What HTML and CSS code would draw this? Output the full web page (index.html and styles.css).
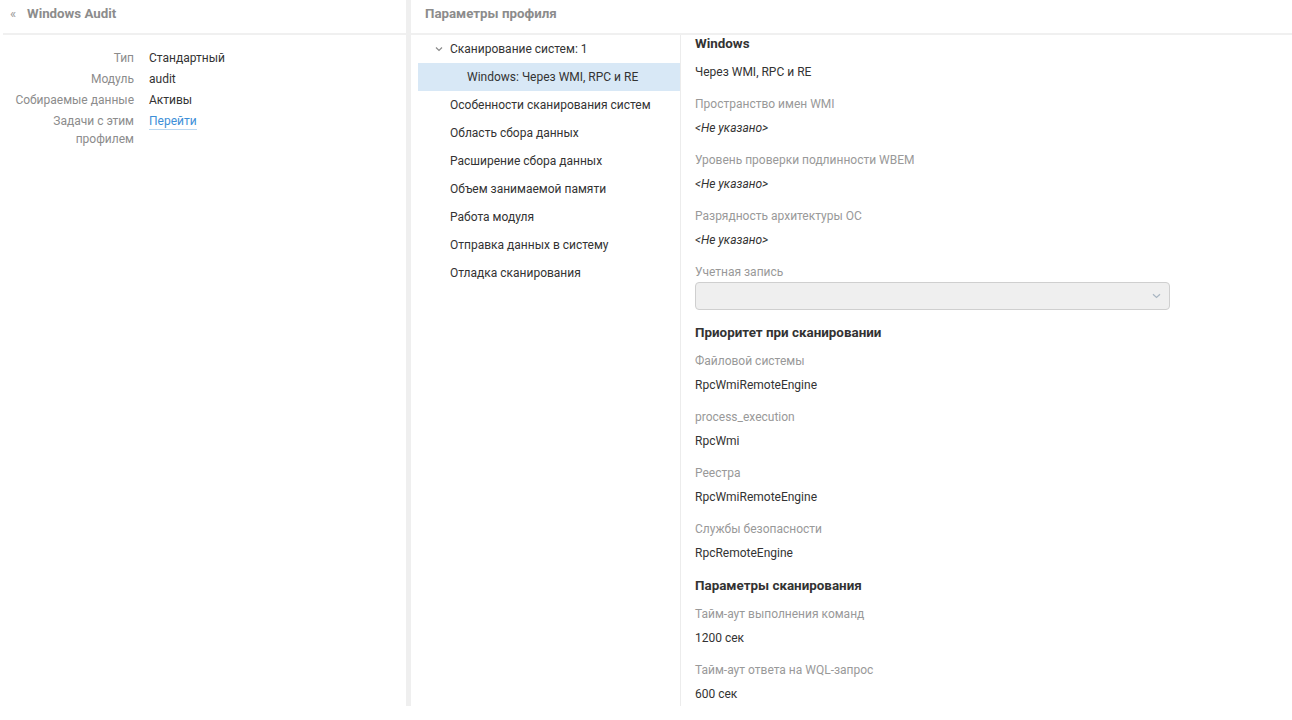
FILE: index.html
```html
<!DOCTYPE html>
<html lang="ru">
<head>
<meta charset="utf-8">
<title>Windows Audit</title>
<link rel="stylesheet" href="styles.css">
</head>
<body>
<div class="app">
  <aside class="left">
    <div class="header left-header"><span class="back">«</span><span class="title">Windows Audit</span></div>
    <div class="props">
      <div class="plabel">Тип</div><div class="pvalue">Стандартный</div>
      <div class="plabel">Модуль</div><div class="pvalue">audit</div>
      <div class="plabel">Собираемые данные</div><div class="pvalue">Активы</div>
      <div class="plabel">Задачи с этим профилем</div><div class="pvalue"><a class="link">Перейти</a></div>
    </div>
  </aside>
  <div class="divider"></div>
  <main class="right">
    <div class="header right-header"><span class="title">Параметры профиля</span></div>
    <div class="body">
      <nav class="tree">
        <div class="row parent"><svg class="chev" width="8" height="6" viewBox="0 0 8 6"><path d="M1 1.5 L4 4.5 L7 1.5" fill="none" stroke="#8a8a8a" stroke-width="1.2"/></svg>Сканирование систем: 1</div>
        <div class="row child selected">Windows: Через WMI, RPC и RE</div>
        <div class="row">Особенности сканирования систем</div>
        <div class="row">Область сбора данных</div>
        <div class="row">Расширение сбора данных</div>
        <div class="row">Объем занимаемой памяти</div>
        <div class="row">Работа модуля</div>
        <div class="row">Отправка данных в систему</div>
        <div class="row">Отладка сканирования</div>
      </nav>
      <section class="details">
        <h3 class="sec first">Windows</h3>
        <div class="val">Через WMI, RPC и RE</div>
        <div class="lbl">Пространство имен WMI</div>
        <div class="val empty">&lt;Не указано&gt;</div>
        <div class="lbl">Уровень проверки подлинности WBEM</div>
        <div class="val empty">&lt;Не указано&gt;</div>
        <div class="lbl">Разрядность архитектуры ОС</div>
        <div class="val empty">&lt;Не указано&gt;</div>
        <div class="lbl">Учетная запись</div>
        <div class="select"><svg width="9" height="6" viewBox="0 0 9 6"><path d="M1 1.2 L4.5 4.5 L8 1.2" fill="none" stroke="#a9b6c2" stroke-width="1.2"/></svg></div>
        <h3 class="sec">Приоритет при сканировании</h3>
        <div class="lbl">Файловой системы</div>
        <div class="val">RpcWmiRemoteEngine</div>
        <div class="lbl">process_execution</div>
        <div class="val">RpcWmi</div>
        <div class="lbl">Реестра</div>
        <div class="val">RpcWmiRemoteEngine</div>
        <div class="lbl">Службы безопасности</div>
        <div class="val">RpcRemoteEngine</div>
        <h3 class="sec later">Параметры сканирования</h3>
        <div class="lbl">Тайм-аут выполнения команд</div>
        <div class="val">1200 сек</div>
        <div class="lbl">Тайм-аут ответа на WQL-запрос</div>
        <div class="val">600 сек</div>
      </section>
    </div>
  </main>
</div>
</body>
</html>
```

FILE: styles.css
```css
* { box-sizing: border-box; }
html, body { margin: 0; padding: 0; background: #fff; }
body {
  font-family: Roboto, "Liberation Sans", Arial, sans-serif;
  font-size: 12px;
  color: #333;
}
.app {
  display: flex;
  height: 706px;
  overflow: hidden;
}
.left {
  width: 406px;
  flex: none;
  padding-left: 3px;
}
.divider {
  width: 5px;
  flex: none;
  background: #efefef;
}
.right {
  flex: 1;
  display: flex;
  flex-direction: column;
  min-width: 0;
}
.header {
  height: 35px;
  border-bottom: 2px solid #f0f0f0;
  display: flex;
  align-items: center;
  padding-bottom: 7px;
}
.header .title {
  font-size: 13.3px;
  font-weight: 700;
  color: #8c8c8c;
}
.left-header { padding-left: 7px; }
.back {
  color: #9a9a9a;
  font-size: 13px;
  width: 17px;
}
.right-header { padding-left: 14px; }

.props {
  display: grid;
  grid-template-columns: 120px 1fr;
  column-gap: 15px;
  row-gap: 3px;
  padding-top: 14px;
  padding-left: 11px;
  line-height: 18px;
}
.plabel {
  text-align: right;
  color: #8c8c8c;
}
.pvalue { color: #333; }
.link {
  color: #3d8fd8;
  border-bottom: 1px solid #bcd9f1;
  padding-bottom: 1px;
  cursor: pointer;
}

.body {
  flex: 1;
  display: flex;
  min-height: 0;
}
.tree {
  width: 270px;
  flex: none;
  padding-left: 7px;
  border-right: 1px solid #ececec;
}
.row {
  height: 28px;
  display: flex;
  align-items: center;
  padding-left: 32px;
  padding-bottom: 0;
  color: #333;
  white-space: nowrap;
}
.row.parent { padding-left: 17px; }
.chev { margin-right: 7px; }
.row.child { padding-left: 49px; }
.row.selected { background: #d8e8f6; }

.details {
  flex: 1;
  padding-left: 14px;
  padding-top: 0;
}
.sec {
  margin: 3px 0 7px;
  font-size: 13.4px;
  font-weight: 700;
  line-height: 18px;
  height: 18px;
  color: #333;
}
.sec.first { margin-top: 0; }
.sec.later { margin-top: 12px; }
.lbl {
  height: 24px;
  line-height: 24px;
  color: #999;
}
.val {
  height: 24px;
  line-height: 24px;
  margin-bottom: 8px;
  color: #333;
}
.val.empty { font-style: italic; }
.select {
  width: 475px;
  height: 28px;
  margin-top: -2px;
  margin-bottom: 14px;
  background: #efefef;
  border: 1px solid #cfcfcf;
  border-radius: 4px;
  display: flex;
  align-items: center;
  justify-content: flex-end;
  padding-right: 8px;
}
```
